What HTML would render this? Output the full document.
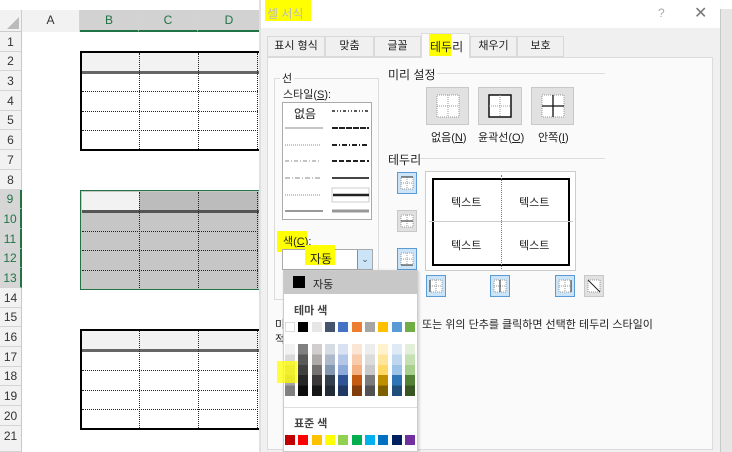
<!DOCTYPE html><html><head><meta charset="utf-8"><style>
*{margin:0;padding:0;box-sizing:border-box}
body{width:732px;height:452px;overflow:hidden;background:#fff;position:relative;font-family:"Liberation Sans","Noto Sans CJK KR",sans-serif;font-size:11px;color:#222}
.a{position:absolute}
.rh{position:absolute;left:0;width:22px;background:#f2f2f2;border-bottom:1px solid #d4d4d4;border-right:1px solid #c8c8c8;text-align:center;font-size:12px;color:#333}
.rs{background:#d6d6d6;color:#217346;border-right:2px solid #217346}
.ch{position:absolute;top:10px;height:22px;border-right:1px solid #d4d4d4;background:#f2f2f2;text-align:center;line-height:21px;font-size:12px;color:#333}
.cs{background:#d2d2d2;color:#217346;border-bottom:2px solid #217346}
.hd{position:absolute;border-top:1px dotted #222;height:0}
.vd{position:absolute;border-left:1px dotted #222;width:0}
.sw{position:absolute;width:10px;height:10px}
.btn{position:absolute;border:1px solid #c8c8c8;background:#e1e1e1}
.bb{position:absolute;border:1px solid #5b9bd5;background:#cce4f7;width:20px;height:22px}
</style></head><body>
<!-- column headers -->
<div class="a" style="left:0;top:10px;width:22px;height:22px;background:#f2f2f2;border-right:1px solid #ccc;border-bottom:1px solid #ccc"></div>
<svg class="a" style="left:6px;top:16px" width="14" height="14"><polygon points="13,1 13,13 1,13" fill="#bbb"/></svg>
<div class="ch" style="left:22px;width:58px">A</div>
<div class="ch cs" style="left:80px;width:59px">B</div>
<div class="ch cs" style="left:139px;width:59px">C</div>
<div class="ch cs" style="left:198px;width:63px">D</div>
<!-- rows -->
<div class="rh" style="top:32px;height:20px;line-height:20px">1</div>
<div class="rh" style="top:52px;height:19px;line-height:19px">2</div>
<div class="rh" style="top:71px;height:20px;line-height:20px">3</div>
<div class="rh" style="top:91px;height:20px;line-height:20px">4</div>
<div class="rh" style="top:111px;height:19px;line-height:19px">5</div>
<div class="rh" style="top:130px;height:20px;line-height:20px">6</div>
<div class="rh" style="top:150px;height:20px;line-height:20px">7</div>
<div class="rh" style="top:170px;height:20px;line-height:20px">8</div>
<div class="rh rs" style="top:190px;height:19px;line-height:19px">9</div>
<div class="rh rs" style="top:209px;height:20px;line-height:20px">10</div>
<div class="rh rs" style="top:229px;height:20px;line-height:20px">11</div>
<div class="rh rs" style="top:249px;height:19px;line-height:19px">12</div>
<div class="rh rs" style="top:268px;height:20px;line-height:20px">13</div>
<div class="rh" style="top:288px;height:20px;line-height:20px">14</div>
<div class="rh" style="top:308px;height:19px;line-height:19px">15</div>
<div class="rh" style="top:327px;height:20px;line-height:20px">16</div>
<div class="rh" style="top:347px;height:20px;line-height:20px">17</div>
<div class="rh" style="top:367px;height:19px;line-height:19px">18</div>
<div class="rh" style="top:386px;height:20px;line-height:20px">19</div>
<div class="rh" style="top:406px;height:20px;line-height:20px">20</div>
<div class="rh" style="top:426px;height:26px;line-height:20px">21</div>

<!-- table 1 -->
<div class="a" style="left:80px;top:51px;width:190px;height:100px;border:2px solid #000;border-right:none"></div>
<div class="a" style="left:82px;top:53px;width:180px;height:18px;background:#f2f2f2"></div>
<div class="a" style="left:82px;top:71px;width:180px;height:3px;background:#666"></div>
<div class="hd" style="left:82px;top:91px;width:180px"></div><div class="hd" style="left:82px;top:111px;width:180px"></div><div class="hd" style="left:82px;top:130px;width:180px"></div>
<div class="vd" style="left:139px;top:53px;height:96px"></div><div class="vd" style="left:198px;top:53px;height:96px"></div><div class="vd" style="left:257px;top:53px;height:96px"></div>
<!-- table 2 -->
<div class="a" style="left:80px;top:190px;width:190px;height:100px;border:1px solid #217346;background:#c6c6c6"></div>
<div class="a" style="left:82px;top:192px;width:57px;height:18px;background:#f2f2f2"></div>
<div class="a" style="left:139px;top:192px;width:125px;height:18px;background:#bcbcbc"></div>
<div class="a" style="left:82px;top:210px;width:180px;height:3px;background:#555"></div>
<div class="hd" style="left:82px;top:231px;width:180px"></div><div class="hd" style="left:82px;top:250px;width:180px"></div><div class="hd" style="left:82px;top:270px;width:180px"></div>
<div class="vd" style="left:139px;top:192px;height:96px"></div><div class="vd" style="left:198px;top:192px;height:96px"></div><div class="vd" style="left:257px;top:192px;height:96px"></div>
<!-- table 3 -->
<div class="a" style="left:80px;top:329px;width:190px;height:101px;border:2px solid #000;border-right:none"></div>
<div class="a" style="left:82px;top:331px;width:180px;height:18px;background:#f2f2f2"></div>
<div class="a" style="left:82px;top:349px;width:180px;height:3px;background:#666"></div>
<div class="hd" style="left:82px;top:370px;width:180px"></div><div class="hd" style="left:82px;top:390px;width:180px"></div><div class="hd" style="left:82px;top:409px;width:180px"></div>
<div class="vd" style="left:139px;top:331px;height:97px"></div><div class="vd" style="left:198px;top:331px;height:97px"></div><div class="vd" style="left:257px;top:331px;height:97px"></div>

<!-- dialog -->
<div class="a" style="left:259px;top:0;width:2px;height:452px;background:#e0e0e0"></div>
<div class="a" style="left:261px;top:0;width:459px;height:452px;background:#f0f0f0"></div>
<div class="a" style="left:261px;top:0;width:459px;height:28px;background:#fff"></div>
<div class="a" style="left:720px;top:9px;width:12px;height:443px;background:#e6e6e6;border-left:1px solid #c8c8c8"></div>
<div class="a" style="left:265px;top:0;width:46px;height:21px;background:#ffff00"></div>
<div class="a" style="left:267px;top:5px;font-size:12px;color:#bbb">셀 서식</div>
<div class="a" style="left:658px;top:6px;font-size:12px;color:#aaa">?</div>
<div class="a" style="left:694px;top:3px;font-size:16px;color:#777">✕</div>
<!-- tabs -->
<div class="a" style="left:267px;top:36px;width:58px;height:21px;border:1px solid #d9d9d9;background:#f0f0f0;text-align:center;line-height:19px">표시 형식</div>
<div class="a" style="left:325px;top:36px;width:49px;height:21px;border:1px solid #d9d9d9;background:#f0f0f0;text-align:center;line-height:19px">맞춤</div>
<div class="a" style="left:374px;top:36px;width:47px;height:21px;border:1px solid #d9d9d9;background:#f0f0f0;text-align:center;line-height:19px">글꼴</div>
<div class="a" style="left:470px;top:36px;width:47px;height:21px;border:1px solid #d9d9d9;background:#f0f0f0;text-align:center;line-height:19px">채우기</div>
<div class="a" style="left:517px;top:36px;width:47px;height:21px;border:1px solid #d9d9d9;background:#f0f0f0;text-align:center;line-height:19px">보호</div>
<div class="a" style="left:267px;top:57px;width:446px;height:393px;background:#fafafa;border:1px solid #dcdcdc"></div>
<div class="a" style="left:421px;top:33px;width:49px;height:25px;background:#fafafa;border:1px solid #dcdcdc;border-bottom:none"></div>
<div class="a" style="left:429px;top:34px;width:22px;height:22px;background:#ffff00"></div>
<div class="a" style="left:430px;top:38px;font-size:12px">테두리</div>
<!-- 선 group -->
<div class="a" style="left:274px;top:78px;width:105px;height:222px;border:1px solid #dcdcdc"></div>
<div class="a" style="left:280px;top:70px;background:#fafafa;padding:0 2px">선</div>
<div class="a" style="left:283px;top:86px">스타일(<u>S</u>):</div>
<div class="a" style="left:282px;top:102px;width:90px;height:118px;border:1px solid #aaa;background:#fff"></div>
<div class="a" style="left:294px;top:105px;font-size:12px">없음</div>
<svg class="a" style="left:283px;top:103px" width="88" height="116">
<g stroke="#888" stroke-width="1">
<line x1="2" y1="25" x2="40" y2="25"/>
<line x1="2" y1="42" x2="38" y2="42" stroke-dasharray="1,1"/>
<line x1="2" y1="58" x2="38" y2="58" stroke-dasharray="4,2,1,2"/>
<line x1="2" y1="75" x2="38" y2="75" stroke-dasharray="5,2,1,2"/>
<line x1="2" y1="92" x2="38" y2="92" stroke-dasharray="1,1"/>
<line x1="2" y1="108" x2="40" y2="108" stroke="#333"/>
</g>
<g stroke="#222">
<line x1="49" y1="8" x2="86" y2="8" stroke-dasharray="3,2,1,2,1,2" stroke-width="1.5"/>
<line x1="49" y1="25" x2="86" y2="25" stroke-dasharray="6,1" stroke-width="2"/>
<line x1="49" y1="42" x2="86" y2="42" stroke-dasharray="5,2,1,2" stroke-width="2"/>
<line x1="49" y1="58" x2="86" y2="58" stroke-dasharray="5,2" stroke-width="2"/>
<line x1="49" y1="75" x2="86" y2="75" stroke-width="2" stroke="#444"/>
<rect x="49" y="85" width="37" height="14" fill="none" stroke="#ccc"/>
<line x1="50" y1="92" x2="86" y2="92" stroke-width="2.5"/>
<line x1="49" y1="108" x2="86" y2="108" stroke-width="3" stroke="#999"/>
</g></svg>
<div class="a" style="left:277px;top:231px;width:30px;height:21px;background:#ffff00"></div>
<div class="a" style="left:283px;top:233px">색(<u>C</u>):</div>
<div class="a" style="left:282px;top:249px;width:91px;height:21px;border:1px solid #aaa;background:#fff"></div>
<div class="a" style="left:305px;top:245px;width:30px;height:20px;background:#ffff00"></div>
<div class="a" style="left:310px;top:250px;font-size:12px">자동</div>
<div class="a" style="left:357px;top:250px;width:15px;height:19px;background:#cce4f7;border-left:1px solid #5b9bd5;text-align:center;font-size:9px;line-height:18px;color:#555">⌄</div>
<div class="a" style="left:275px;top:316px">미</div><div class="a" style="left:275px;top:331px">적</div>
<!-- 미리 설정 -->
<div class="a" style="left:388px;top:66px;font-size:12px">미리 설정</div>
<div class="a" style="left:437px;top:73px;width:168px;height:1px;background:#dcdcdc"></div>
<div class="btn" style="left:426px;top:87px;width:43px;height:38px"></div>
<div class="btn" style="left:478px;top:87px;width:44px;height:38px"></div>
<div class="btn" style="left:531px;top:87px;width:43px;height:38px"></div>
<svg class="a" style="left:436px;top:94px" width="24" height="24"><rect x="1" y="1" width="22" height="22" fill="#fff" stroke="#999" stroke-dasharray="1,1"/><path d="M12 1V23M1 12H23" stroke="#999" stroke-dasharray="1,1"/></svg>
<svg class="a" style="left:488px;top:94px" width="24" height="24"><rect x="1" y="1" width="22" height="22" fill="#fff" stroke="#111" stroke-width="1.5"/><path d="M12 1V23M1 12H23" stroke="#999" stroke-dasharray="1,1"/></svg>
<svg class="a" style="left:541px;top:94px" width="24" height="24"><rect x="1" y="1" width="22" height="22" fill="#fff" stroke="#999" stroke-dasharray="1,1"/><path d="M12 1V23M1 12H23" stroke="#111" stroke-width="1.3"/></svg>
<div class="a" style="left:431px;top:129px">없음(<u>N</u>)</div>
<div class="a" style="left:478px;top:129px">윤곽선(<u>O</u>)</div>
<div class="a" style="left:538px;top:129px">안쪽(<u>I</u>)</div>
<div class="a" style="left:388px;top:151px;font-size:12px">테두리</div>
<div class="a" style="left:420px;top:158px;width:185px;height:1px;background:#dcdcdc"></div>
<div class="bb" style="left:397px;top:172px"></div>
<div class="btn" style="left:397px;top:210px;width:20px;height:22px"></div>
<div class="bb" style="left:397px;top:248px"></div>
<div class="bb" style="left:426px;top:275px"></div>
<div class="bb" style="left:490px;top:275px"></div>
<div class="bb" style="left:555px;top:275px"></div>
<div class="btn" style="left:584px;top:275px;width:20px;height:22px"></div>
<svg class="a" style="left:400px;top:176px" width="14" height="14"><rect x="1" y="1" width="12" height="12" fill="#fff" stroke="#999" stroke-dasharray="1,1"/><path d="M7 1V13M1 7H13" stroke="#999" stroke-dasharray="1,1"/><path d="M1 1H13" stroke="#222"/></svg>
<svg class="a" style="left:400px;top:214px" width="14" height="14"><rect x="1" y="1" width="12" height="12" fill="#fff" stroke="#999" stroke-dasharray="1,1"/><path d="M7 1V13" stroke="#999" stroke-dasharray="1,1"/><path d="M1 7H13" stroke="#222"/></svg>
<svg class="a" style="left:400px;top:252px" width="14" height="14"><rect x="1" y="1" width="12" height="12" fill="#fff" stroke="#999" stroke-dasharray="1,1"/><path d="M7 1V13M1 7H13" stroke="#999" stroke-dasharray="1,1"/><path d="M1 13H13" stroke="#222"/></svg>
<svg class="a" style="left:429px;top:279px" width="14" height="14"><rect x="1" y="1" width="12" height="12" fill="#fff" stroke="#999" stroke-dasharray="1,1"/><path d="M7 1V13M1 7H13" stroke="#999" stroke-dasharray="1,1"/><path d="M1 1V13" stroke="#222"/></svg>
<svg class="a" style="left:493px;top:279px" width="14" height="14"><rect x="1" y="1" width="12" height="12" fill="#fff" stroke="#999" stroke-dasharray="1,1"/><path d="M1 7H13" stroke="#999" stroke-dasharray="1,1"/><path d="M7 1V13" stroke="#222"/></svg>
<svg class="a" style="left:558px;top:279px" width="14" height="14"><rect x="1" y="1" width="12" height="12" fill="#fff" stroke="#999" stroke-dasharray="1,1"/><path d="M7 1V13M1 7H13" stroke="#999" stroke-dasharray="1,1"/><path d="M13 1V13" stroke="#222"/></svg>
<svg class="a" style="left:587px;top:279px" width="14" height="14"><rect x="1" y="1" width="12" height="12" fill="#fff" stroke="#999" stroke-dasharray="1,1"/><path d="M1 1L13 13" stroke="#222"/></svg>
<!-- preview -->
<div class="a" style="left:425px;top:171px;width:151px;height:100px;border:1px solid #ccc;background:#fff"></div>
<div class="a" style="left:432px;top:178px;width:138px;height:88px;border:2px solid #000"></div>
<div class="vd" style="left:501px;top:175px;height:94px;border-left-color:#777"></div>
<div class="a" style="left:429px;top:221px;width:144px;height:1px;background:#ccc"></div>
<div class="a" style="left:451px;top:194px">텍스트</div><div class="a" style="left:519px;top:194px">텍스트</div>
<div class="a" style="left:451px;top:237px">텍스트</div><div class="a" style="left:519px;top:237px">텍스트</div>
<div class="a" style="left:422px;top:316px;font-size:11px">또는 위의 단추를 클릭하면 선택한 테두리 스타일이</div>
<!-- dropdown -->
<div class="a" style="left:283px;top:270px;width:135px;height:182px;background:#fff;border:1px solid #ccc;box-shadow:1px 1px 3px rgba(0,0,0,.2)"></div>
<div class="a" style="left:284px;top:271px;width:133px;height:23px;background:#c8c8c8"></div>
<div class="a" style="left:293px;top:276px;width:12px;height:12px;background:#000"></div>
<div class="a" style="left:313px;top:276px">자동</div>
<div class="a" style="left:294px;top:302px;font-weight:bold;color:#444">테마 색</div>
<div class="a" style="left:284px;top:407px;width:133px;height:1px;background:#ddd"></div>
<div class="a" style="left:294px;top:415px;font-weight:bold;color:#444">표준 색</div>
<div class="sw" style="left:285px;top:322px;background:#fff;border:1px solid #ddd"></div>
<div class="sw" style="left:298px;top:322px;background:#000"></div>
<div class="sw" style="left:312px;top:322px;background:#e7e6e6"></div>
<div class="sw" style="left:325px;top:322px;background:#44546a"></div>
<div class="sw" style="left:338px;top:322px;background:#4472c4"></div>
<div class="sw" style="left:352px;top:322px;background:#ed7d31"></div>
<div class="sw" style="left:365px;top:322px;background:#a5a5a5"></div>
<div class="sw" style="left:378px;top:322px;background:#ffc000"></div>
<div class="sw" style="left:392px;top:322px;background:#5b9bd5"></div>
<div class="sw" style="left:405px;top:322px;background:#70ad47"></div>
<div class="a" style="left:285px;top:344px;width:10px;height:52px;background:linear-gradient(#f2f2f2 0 20%,#d9d9d9 20% 40%,#bfbfbf 40% 60%,#a6a6a6 60% 80%,#808080 80%)"></div>
<div class="a" style="left:298px;top:344px;width:10px;height:52px;background:linear-gradient(#808080 0 20%,#595959 20% 40%,#404040 40% 60%,#262626 60% 80%,#0d0d0d 80%)"></div>
<div class="a" style="left:312px;top:344px;width:10px;height:52px;background:linear-gradient(#d0cece 0 20%,#aeaaaa 20% 40%,#757171 40% 60%,#3a3838 60% 80%,#171616 80%)"></div>
<div class="a" style="left:325px;top:344px;width:10px;height:52px;background:linear-gradient(#d6dce4 0 20%,#adb9ca 20% 40%,#8497b0 40% 60%,#333f4f 60% 80%,#222b35 80%)"></div>
<div class="a" style="left:338px;top:344px;width:10px;height:52px;background:linear-gradient(#d9e2f3 0 20%,#b4c6e7 20% 40%,#8eaadb 40% 60%,#2f5496 60% 80%,#1f3864 80%)"></div>
<div class="a" style="left:352px;top:344px;width:10px;height:52px;background:linear-gradient(#fbe5d5 0 20%,#f7cbac 20% 40%,#f4b183 40% 60%,#c55a11 60% 80%,#833c0b 80%)"></div>
<div class="a" style="left:365px;top:344px;width:10px;height:52px;background:linear-gradient(#ededed 0 20%,#dbdbdb 20% 40%,#c9c9c9 40% 60%,#7b7b7b 60% 80%,#525252 80%)"></div>
<div class="a" style="left:378px;top:344px;width:10px;height:52px;background:linear-gradient(#fff2cc 0 20%,#ffe599 20% 40%,#ffd966 40% 60%,#bf8f00 60% 80%,#7f6000 80%)"></div>
<div class="a" style="left:392px;top:344px;width:10px;height:52px;background:linear-gradient(#deebf6 0 20%,#bdd7ee 20% 40%,#9dc3e6 40% 60%,#2e75b5 60% 80%,#1f4e79 80%)"></div>
<div class="a" style="left:405px;top:344px;width:10px;height:52px;background:linear-gradient(#e2efd9 0 20%,#c5e0b3 20% 40%,#a8d08d 40% 60%,#538135 60% 80%,#375623 80%)"></div>
<div class="a" style="left:277px;top:361px;width:20px;height:22px;background:rgba(255,255,0,.75)"></div>
<div class="sw" style="left:285px;top:435px;background:#c00000"></div>
<div class="sw" style="left:298px;top:435px;background:#ff0000"></div>
<div class="sw" style="left:312px;top:435px;background:#ffc000"></div>
<div class="sw" style="left:325px;top:435px;background:#ffff00"></div>
<div class="sw" style="left:338px;top:435px;background:#92d050"></div>
<div class="sw" style="left:352px;top:435px;background:#00b050"></div>
<div class="sw" style="left:365px;top:435px;background:#00b0f0"></div>
<div class="sw" style="left:378px;top:435px;background:#0070c0"></div>
<div class="sw" style="left:392px;top:435px;background:#002060"></div>
<div class="sw" style="left:405px;top:435px;background:#7030a0"></div>
</body></html>
